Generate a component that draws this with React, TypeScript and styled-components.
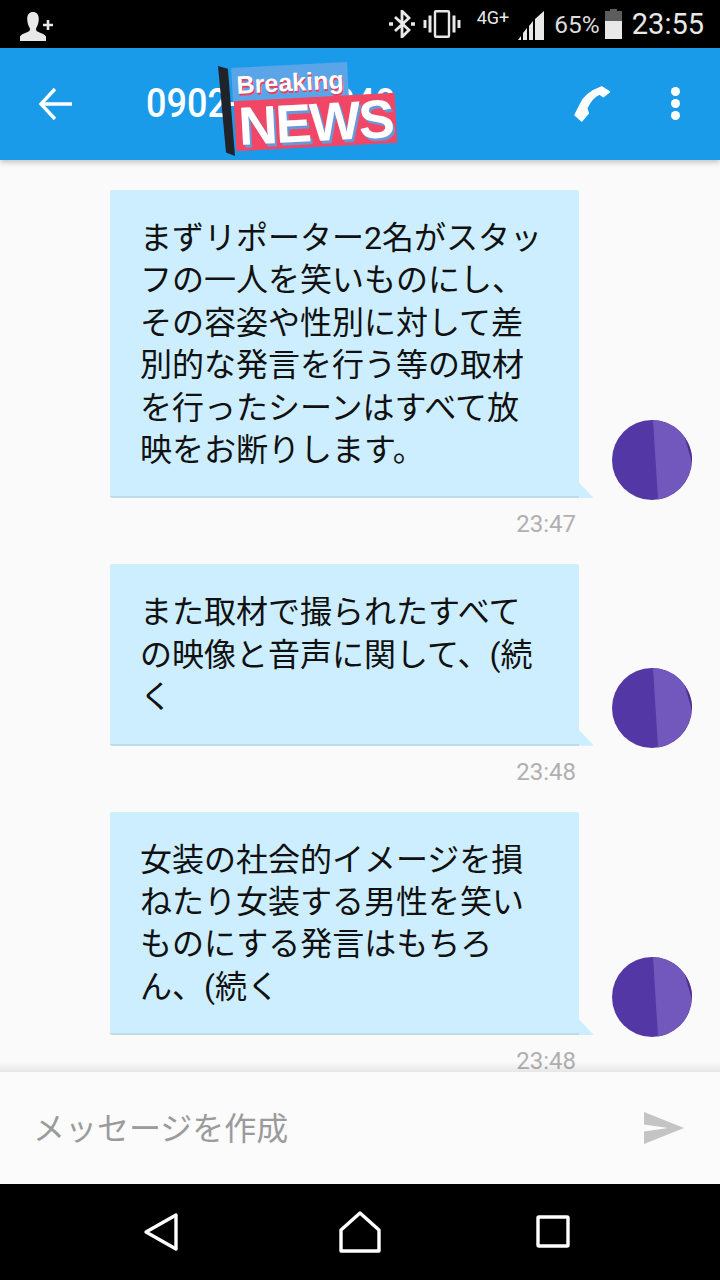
import React from 'react'
import styled, { createGlobalStyle } from 'styled-components'

const messages = [
  {
    lines: [
      'まずリポーター2名がスタッ',
      'フの一人を笑いものにし、',
      'その容姿や性別に対して差',
      '別的な発言を行う等の取材',
      'を行ったシーンはすべて放',
      '映をお断りします。',
    ],
    time: '23:47',
  },
  {
    lines: ['また取材で撮られたすべて', 'の映像と音声に関して、(続', 'く'],
    time: '23:48',
  },
  {
    lines: [
      '女装の社会的イメージを損',
      'ねたり女装する男性を笑い',
      'ものにする発言はもちろ',
      'ん、(続く',
    ],
    time: '23:48',
  },
]

const App = () => {
  return (
    <Screen>
      <GlobalStyle />
      <StatusBar>
        <PersonIcon width="36" height="30" viewBox="0 0 36 30">
          <path d="M13 0c3.500 0 5.800 2.600 5.800 6.800 0 3.500-1 7-2.500 9.200-.8 1.500 0 3 1.500 3.800 3 1.300 7 2.500 8.200 4.700V29H0v-4.500c1.200-2.200 5.200-3.400 8.200-4.700 1.500-.8 2.300-2.300 1.500-3.800C8.200 13.800 7.200 10.300 7.200 6.800 7.200 2.600 9.500 0 13 0z" fill="#e8e8e8" />
          <path d="M28 8v10M23 13h10" stroke="#e8e8e8" strokeWidth="2.600" />
        </PersonIcon>
        <StatusRight>
          <BluetoothGlyph width="26" height="28" viewBox="0 0 26 28">
            <path d="M6 7l14 13-7 7V1l7 7L6 21" fill="none" stroke="#e8e8e8" strokeWidth="2.800" />
            <path d="M0 14h4M22 14h4" stroke="#e8e8e8" strokeWidth="3.400" />
          </BluetoothGlyph>
          <VibrateGlyph width="38" height="28" viewBox="0 0 38 28">
            <rect x="12" y="1.200" width="14" height="25.600" rx="1" fill="none" stroke="#e8e8e8" strokeWidth="2.400" />
            <path d="M7 5.500v17M2 10v8M31 5.500v17M36 10v8" stroke="#e8e8e8" strokeWidth="3" />
          </VibrateGlyph>
          <NetworkLabel>4G+</NetworkLabel>
          <SignalGlyph width="28" height="30" viewBox="0 0 28 30">
            <path d="M1 29l3-4v4zM6 29v-7l4-5v12zM12 29V15l4-5v19zM18 29V8l9-8v29z" fill="#e8e8e8" />
          </SignalGlyph>
          <BatteryLabel>65%</BatteryLabel>
          <BatteryGlyph width="17" height="30" viewBox="0 0 17 30">
            <path d="M5 0h7v2h5v10H0V2h5z" fill="#5d5d5d" />
            <rect y="12" width="17" height="18" fill="#e8e8e8" />
          </BatteryGlyph>
          <Clock>23:55</Clock>
        </StatusRight>
      </StatusBar>

      <AppBar>
        <BackIcon width="36" height="36" viewBox="0 0 36 36">
          <path d="M34 18H4M17 3L3 18l14 15" fill="none" stroke="#fff" strokeWidth="3.400" />
        </BackIcon>
        <Title>0902-000-0040</Title>
        <Sticker>
          <StickerPole />
          <BreakingTag>
            <BreakingText>Breaking</BreakingText>
          </BreakingTag>
          <NewsTag>
            <NewsText>NEWS</NewsText>
          </NewsTag>
        </Sticker>
        <PhoneIcon width="38" height="40" viewBox="0 0 38 40">
          <path d="M28.700 3L36.500 8 30.300 12.700 26.300 10Q19 13 13.700 24.300L15.300 29.300 8.700 37 2 31 7 21Q12 9 28.700 3z" fill="#fff" stroke="#fff" strokeWidth="1.500" strokeLinejoin="round" />
        </PhoneIcon>
        <MoreDots>
          <Dot />
          <Dot />
          <Dot />
        </MoreDots>
      </AppBar>

      <Thread>
        {messages.map((message, i) => (
          <MessageGroup key={i}>
            <MessageRow>
              <Bubble>
                {message.lines.map((line) => (
                  <BubbleLine key={line}>{line}</BubbleLine>
                ))}
                <BubbleTail />
              </Bubble>
              <Avatar width="80" height="80" viewBox="0 0 80 80">
                <circle cx="40" cy="40" r="40" fill="#5337a5" />
                <path d="M41 0a40 40 0 0 1 38 33 40 40 0 0 1-33 46.500z" fill="#7258bd" />
                <path d="M73 18a40 40 0 0 1 7 25z" fill="#4a3192" />
              </Avatar>
            </MessageRow>
            <Time>{message.time}</Time>
          </MessageGroup>
        ))}
        <ThreadShadow />
      </Thread>

      <Composer>
        <Placeholder>メッセージを作成</Placeholder>
        <SendIcon width="40" height="32" viewBox="0 0 40 32">
          <path d="M0 0l40 16L0 32v-12.500L24 16 0 12.500z" fill="#c4c4c4" />
        </SendIcon>
      </Composer>

      <NavBar>
        <NavIcon $after={160} width="36" height="40" viewBox="0 0 36 40">
          <path d="M33 3v34L3 20z" fill="none" stroke="#fff" strokeWidth="3.400" strokeLinejoin="round" />
        </NavIcon>
        <NavIcon $after={154} width="42" height="42" viewBox="0 0 42 42">
          <path d="M21 2L40 19v21H2V19z" fill="none" stroke="#fff" strokeWidth="3.400" strokeLinejoin="round" />
        </NavIcon>
        <NavIcon $after={0} width="36" height="36" viewBox="0 0 36 36">
          <rect x="3" y="3" width="30" height="29" rx="1" fill="none" stroke="#fff" strokeWidth="3.400" />
        </NavIcon>
      </NavBar>
    </Screen>
  )
}

export default App

//Styled Components
const GlobalStyle = createGlobalStyle`
  html, body {
    margin: 0;
    padding: 0;
    background: #000;
  }
`
const Screen = styled.div`
  width: 720px;
  height: 1280px;
  display: flex;
  flex-direction: column;
  overflow: hidden;
  font-family: Roboto, "Noto Sans CJK JP", sans-serif;
`
const StatusBar = styled.div`
  height: 48px;
  flex: none;
  background: #000;
  display: flex;
  align-items: center;
  justify-content: space-between;
  padding: 0 16px 0 20px;
  box-sizing: border-box;
  color: #e8e8e8;
`
const PersonIcon = styled.svg`
  margin-top: 6px;
`
const StatusRight = styled.div`
  display: flex;
  align-items: center;
`
const BluetoothGlyph = styled.svg`
  margin-right: 8px;
`
const VibrateGlyph = styled.svg`
  margin-right: 16px;
`
const SignalGlyph = styled.svg`
  margin-left: 8px;
  margin-top: 4px;
`
const NetworkLabel = styled.span`
  font-size: 18px;
  margin-top: -14px;
`
const BatteryLabel = styled.span`
  font-size: 24.500px;
  margin-left: 9px;
  color: #dcdcdc;
`
const BatteryGlyph = styled.svg`
  margin-left: 5px;
`
const Clock = styled.span`
  font-size: 29px;
  margin-left: 10px;
`
const AppBar = styled.div`
  height: 112px;
  flex: none;
  background: #1a9bea;
  display: flex;
  align-items: center;
  position: relative;
  z-index: 2;
  box-shadow: 0 2px 6px rgba(0, 0, 0, 0.25);
`
const BackIcon = styled.svg`
  margin-left: 38px;
`
const Title = styled.div`
  margin-left: 72px;
  width: 360px;
  font-size: 36px;
  font-weight: 500;
  color: #fff;
  white-space: nowrap;
  transform: scaleY(1.120);
`
const Sticker = styled.div`
  position: absolute;
  left: 218px;
  top: 15px;
  width: 182px;
  height: 92px;
`
const StickerPole = styled.div`
  position: absolute;
  left: 0;
  top: 3px;
  width: 17px;
  height: 90px;
  background: #20242a;
  clip-path: polygon(0 0, 58% 3%, 100% 100%, 47% 96%);
`
const BreakingTag = styled.div`
  position: absolute;
  left: 14px;
  top: 2px;
  width: 116px;
  height: 34px;
  background: #5aa5e8;
  transform: rotate(-3deg);
  display: flex;
  align-items: center;
  justify-content: center;
`
const BreakingText = styled.span`
  font-family: "Liberation Sans", sans-serif;
  font-size: 25px;
  font-weight: 700;
  color: #fff;
  text-shadow: 1px 2px 0 #e8415f;
`
const NewsTag = styled.div`
  position: absolute;
  left: 17px;
  top: 34px;
  width: 161px;
  height: 50px;
  background: #f14767;
  transform: rotate(-3deg);
  display: flex;
  align-items: center;
  justify-content: center;
`
const NewsText = styled.span`
  font-family: "Liberation Sans", sans-serif;
  font-size: 54px;
  font-weight: 700;
  letter-spacing: -2px;
  color: #fff;
  text-shadow: 2px 3px 0 #6b97d6;
`
const PhoneIcon = styled.svg`
  position: absolute;
  left: 573px;
  top: 36px;
`
const MoreDots = styled.div`
  position: absolute;
  left: 671px;
  top: 39px;
  display: flex;
  flex-direction: column;
  gap: 3px;
`
const Dot = styled.div`
  width: 9px;
  height: 9px;
  border-radius: 50%;
  background: #fff;
`
const Thread = styled.div`
  flex: 1;
  min-height: 0;
  background: #fafafa;
  padding: 30px 0 0 110px;
  box-sizing: border-box;
  overflow: hidden;
  position: relative;
`
const ThreadShadow = styled.div`
  position: absolute;
  left: 0;
  right: 0;
  bottom: 0;
  height: 10px;
  background: linear-gradient(rgba(0, 0, 0, 0), rgba(0, 0, 0, 0.08));
`
const MessageGroup = styled.div`
  display: flex;
  flex-direction: column;
`
const MessageRow = styled.div`
  display: flex;
  align-items: flex-end;
`
const Bubble = styled.div`
  width: 469px;
  padding: 27px 0 25px 30px;
  box-sizing: border-box;
  background: #cdeefe;
  border-bottom: 2px solid #bcdcea;
  border-radius: 2px 2px 0 2px;
  position: relative;
`
const BubbleLine = styled.div`
  font-size: 32px;
  line-height: 42.400px;
  color: #111;
  white-space: nowrap;
`
const BubbleTail = styled.div`
  position: absolute;
  right: -15px;
  bottom: -2px;
  width: 15px;
  height: 16px;
  background: #cdeefe;
  clip-path: polygon(0 0, 100% 100%, 0 100%);
`
const Avatar = styled.svg`
  margin-left: 33px;
  margin-bottom: -2px;
`
const Time = styled.div`
  width: 466px;
  height: 66px;
  padding-top: 12px;
  box-sizing: border-box;
  text-align: right;
  font-size: 24px;
  line-height: 28px;
  color: #b0b0b0;
`
const Composer = styled.div`
  height: 112px;
  flex: none;
  background: #fbfbfb;
  display: flex;
  align-items: center;
  justify-content: space-between;
  padding: 0 36px 4px 33px;
  box-sizing: border-box;
`
const Placeholder = styled.div`
  font-size: 32px;
  color: #9b9b9b;
`
const SendIcon = styled.svg`
  margin-top: 4px;
`
const NavBar = styled.div`
  height: 96px;
  flex: none;
  background: #000;
  display: flex;
  align-items: center;
  padding: 0 0 0 143px;
  box-sizing: border-box;
`
const NavIcon = styled.svg<{ $after: number }>`
  margin-right: ${(props) => props.$after}px;
`
